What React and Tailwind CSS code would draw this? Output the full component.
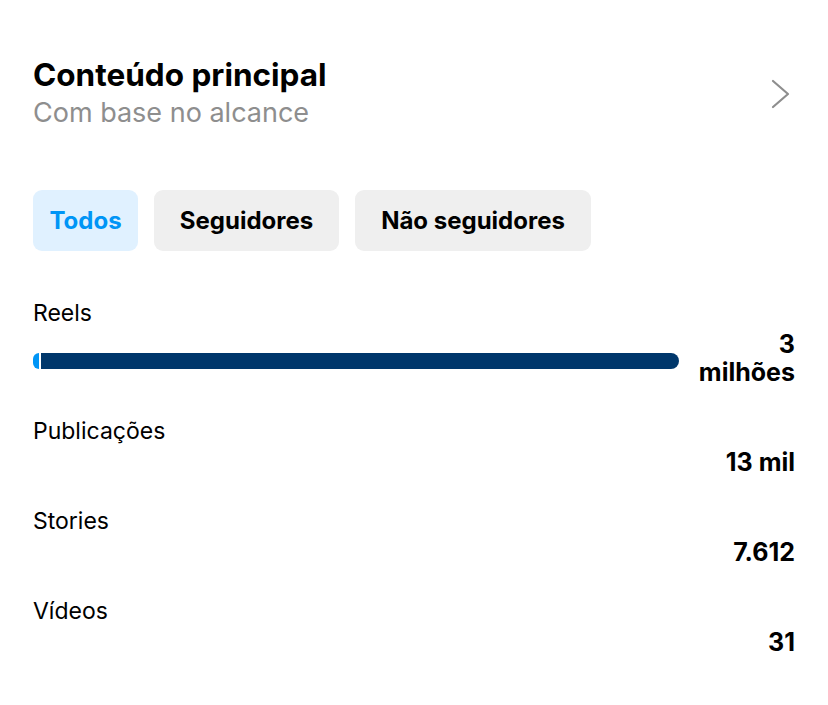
const tabs = [
  { label: "Todos", width: "w-[105px]", active: true },
  { label: "Seguidores", width: "w-[185px]" },
  { label: "Não seguidores", width: "w-[236px]" },
];

const rows = [
  { label: "Reels", value: "3 milhões", bar: true },
  { label: "Publicações", value: "13 mil" },
  { label: "Stories", value: "7.612" },
  { label: "Vídeos", value: "31" },
];

function MetricRow({ row }) {
  return (
    <div>
      <div className="text-[23px] leading-[28px] text-black">{row.label}</div>
      <div className="mt-[3px] flex items-start gap-[16px]">
        <div className="flex-1">
          {row.bar ? (
            <div className="mt-[23px] flex h-[16px] gap-[2px]">
              <div className="w-[6px] rounded-l-full bg-[#0095f6]" />
              <div className="flex-1 rounded-r-full bg-[#00376b]" />
            </div>
          ) : null}
        </div>
        <div className="w-[100px] text-right text-[25px] font-bold leading-[28px] text-black">
          {row.value}
        </div>
      </div>
    </div>
  );
}

export default function App() {
  return (
    <div className="min-h-[705px] w-[828px] bg-white px-[33px] pt-[56px] font-['Inter','Liberation_Sans',sans-serif]">
      <header className="flex items-start justify-between">
        <div>
          <h1 className="text-[31.5px] font-bold leading-[38px] text-black">Conteúdo principal</h1>
          <p className="mt-[3px] text-[27px] leading-[32px] text-[#8e8e8e]">Com base no alcance</p>
        </div>
        <svg className="mr-[4px] mt-[23px] h-[30px] w-[20px]" viewBox="0 0 20 30" fill="none">
          <polyline points="2,2 17,15 2,28" stroke="#8e8e8e" strokeWidth="2.2" strokeLinecap="round" strokeLinejoin="round" />
        </svg>
      </header>

      <div className="mt-[61px] flex gap-[16px]">
        {tabs.map((tab) => (
          <button
            key={tab.label}
            className={[
              "flex h-[61px] items-center justify-center rounded-[9px] text-[24px] font-bold",
              tab.width,
              tab.active ? "bg-[#e0f1ff] text-[#0095f6]" : "bg-[#efefef] text-black",
            ].join(" ")}
          >
            {tab.label}
          </button>
        ))}
      </div>

      <div className="mt-[48px] flex flex-col gap-[31px]">
        {rows.map((row) => (
          <MetricRow key={row.label} row={row} />
        ))}
      </div>
    </div>
  );
}
